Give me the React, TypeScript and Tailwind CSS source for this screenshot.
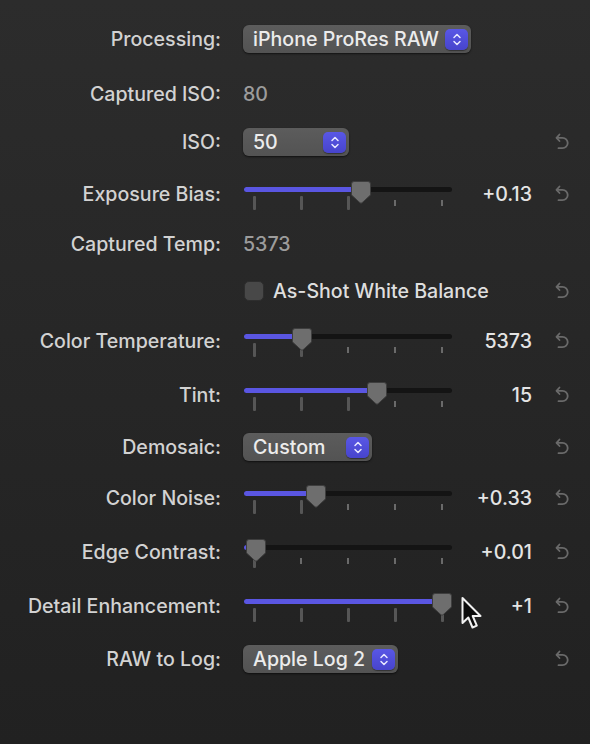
import React from "react";

const FONT = { fontFamily: "Inter, 'Noto Sans', 'Liberation Sans', sans-serif" };

function ResetIcon() {
  return (
    <svg width="16" height="18" viewBox="0 0 16 18" fill="none">
      <path d="M5.5 1.5 L2.5 4.8 L5.5 8" stroke="#6a6a6a" strokeWidth="1.8" strokeLinecap="round" strokeLinejoin="round" />
      <path d="M2.8 4.8 H8.5 A5.2 5.2 0 0 1 8.5 15.2 H4.5" stroke="#6a6a6a" strokeWidth="1.8" strokeLinecap="round" strokeLinejoin="round" />
    </svg>
  );
}

function Stepper() {
  return (
    <div className="w-[23px] h-[21px] rounded-[5px] bg-gradient-to-b from-[#5957e6] to-[#4744cc] flex items-center justify-center shadow-[0_1px_1px_rgba(0,0,0,0.4)]">
      <svg width="10" height="15" viewBox="0 0 10 15" fill="none">
        <path d="M2 5.5 L5 2.5 L8 5.5" stroke="#e8e8ff" strokeWidth="1.5" strokeLinecap="round" strokeLinejoin="round" />
        <path d="M2 9.5 L5 12.5 L8 9.5" stroke="#e8e8ff" strokeWidth="1.5" strokeLinecap="round" strokeLinejoin="round" />
      </svg>
    </div>
  );
}

function Popup({ text, width }: { text: string; width: string }) {
  return (
    <div className={`${width} h-[28px] rounded-[6px] bg-gradient-to-b from-[#5c5c5c] to-[#535353] shadow-[0_1px_2px_rgba(0,0,0,0.6)] flex items-center justify-between pl-[10px] pr-[3px]`}>
      <span className="pt-[2px] text-[19.6px] font-medium text-[#ececec] leading-none">{text}</span>
      <Stepper />
    </div>
  );
}

function Slider({ value }: { value: number }) {
  const ticks = [0, 0.25, 0.5, 0.75, 1];
  const thumbX = 10 + value * 188;
  return (
    <div className="relative w-[208px] h-[28px] ml-[1px]">
      {ticks.map((t, i) => {
        const x = 10 + t * 188;
        const tall = x <= thumbX + 1;
        return tall ? (
          <div key={i} className="absolute top-[16px] h-[14px] w-[3px] rounded-[1px] bg-[#565656]" style={{ left: x - 1.5 }} />
        ) : (
          <div key={i} className="absolute top-[20px] h-[6px] w-[2px] bg-[#6a6a6a]" style={{ left: x - 1 }} />
        );
      })}
      <div className="absolute left-0 right-0 top-[7px] h-[5px] rounded-full bg-[#141414]" />
      <div className="absolute left-0 top-[7px] h-[5px] rounded-full bg-[#5a56e2]" style={{ width: thumbX }} />
      <svg className="absolute top-[1px]" style={{ left: thumbX - 10 }} width="20" height="23" viewBox="0 0 20 23">
        <path d="M3 0.5 H17 Q19.5 0.5 19.5 3 V14 L11 21.8 Q10 22.6 9 21.8 L0.5 14 V3 Q0.5 0.5 3 0.5 Z" fill="#6e6e6e" stroke="#3e3e3e" strokeWidth="1" />
      </svg>
    </div>
  );
}

type RowProps = {
  label?: string;
  mt: string;
  children?: React.ReactNode;
  value?: string;
  reset?: boolean;
};

function Row({ label, mt, children, value, reset }: RowProps) {
  return (
    <div className={`flex items-center h-[28px] ${mt}`}>
      <div className="w-[221px] pt-[2px] text-right text-[19.6px] font-medium text-[#d2d2d2] leading-none whitespace-nowrap">{label}</div>
      <div className="ml-[22px] w-[289px] flex items-center justify-between">
        <div className="flex items-center">{children}</div>
        {value !== undefined && <span className="pt-[2px] text-[19.6px] font-medium text-[#e4e4e4] leading-none">{value}</span>}
      </div>
      <div className="w-[58px] flex justify-center pl-[2px]">{reset && <ResetIcon />}</div>
    </div>
  );
}

export default function App() {
  return (
    <div className="w-[590px] h-[744px] bg-gradient-to-b from-[#2c2c2c] to-[#212121] pt-[25px] relative overflow-hidden" style={FONT}>
      <Row label="Processing:" mt="mt-0">
        <Popup text="iPhone ProRes RAW" width="w-[228px]" />
      </Row>
      <Row label="Captured ISO:" mt="mt-[27px]">
        <span className="pt-[2px] text-[19.6px] font-medium text-[#9c9c9c] leading-none">80</span>
      </Row>
      <Row label="ISO:" mt="mt-[20px]" reset>
        <Popup text="50" width="w-[106px]" />
      </Row>
      <Row label="Exposure Bias:" mt="mt-[24px]" value="+0.13" reset>
        <Slider value={0.569} />
      </Row>
      <Row label="Captured Temp:" mt="mt-[22px]">
        <span className="pt-[2px] text-[19.6px] font-medium text-[#9c9c9c] leading-none">5373</span>
      </Row>
      <Row mt="mt-[19px]" reset>
        <div className="w-[20px] h-[20px] rounded-[5px] bg-[#484848] border border-[#2e2e2e] ml-[1px]" />
        <span className="ml-[9px] pt-[2px] text-[19.6px] font-medium text-[#dedede] leading-none">As-Shot White Balance</span>
      </Row>
      <Row label="Color Temperature:" mt="mt-[22px]" value="5373" reset>
        <Slider value={0.255} />
      </Row>
      <Row label="Tint:" mt="mt-[26px]" value="15" reset>
        <Slider value={0.654} />
      </Row>
      <Row label="Demosaic:" mt="mt-[24px]" reset>
        <Popup text="Custom" width="w-[129px]" />
      </Row>
      <Row label="Color Noise:" mt="mt-[23px]" value="+0.33" reset>
        <Slider value={0.33} />
      </Row>
      <Row label="Edge Contrast:" mt="mt-[26px]" value="+0.01" reset>
        <Slider value={0.01} />
      </Row>
      <Row label="Detail Enhancement:" mt="mt-[26px]" value="+1" reset>
        <Slider value={1} />
      </Row>
      <Row label="RAW to Log:" mt="mt-[25px]" reset>
        <Popup text="Apple Log 2" width="w-[155px]" />
      </Row>

      <svg className="absolute left-[460px] top-[596px]" width="24" height="36" viewBox="0 0 24 36">
        <path d="M2.5 2 L2.5 27 L8.3 21.5 L12.5 31.5 L16.8 29.7 L12.7 20 L20.5 20 Z" fill="#0c0c0c" stroke="#f2f2f2" strokeWidth="2" strokeLinejoin="round" />
      </svg>
    </div>
  );
}
